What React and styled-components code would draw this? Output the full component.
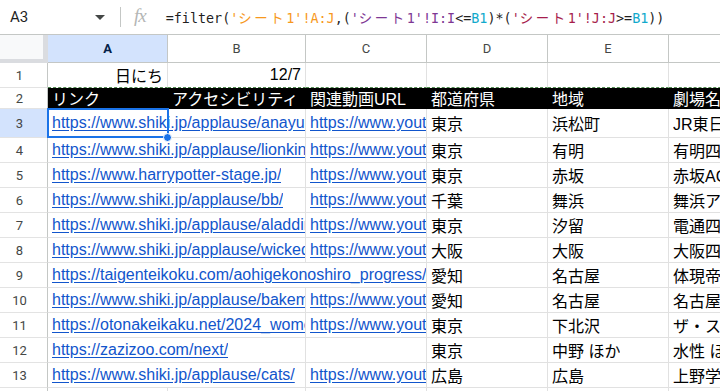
import React from "react";
import styled, { createGlobalStyle, css } from "styled-components";

const GlobalStyle = createGlobalStyle`
    html, body {
        margin: 0;
        padding: 0;
        background: #ffffff;
        overflow: hidden;
    }
    body {
        font-family: "Liberation Sans", Arial, "Noto Sans CJK JP", sans-serif;
    }
`;

const gridLine = "#e1e1e1";
const headLine = "#c4c7c5";
const selectBlue = "#1a73e8";

const formula = [
    { t: "=filter(" },
    { t: "'", c: "#f7981d" },
    { t: "シート", c: "#f7981d", cjk: true },
    { t: "1'!A:J", c: "#f7981d" },
    { t: ",(" },
    { t: "'", c: "#7e3794" },
    { t: "シート", c: "#7e3794", cjk: true },
    { t: "1'!I:I", c: "#7e3794" },
    { t: "<=" },
    { t: "B1", c: "#11a9cc" },
    { t: ")*(" },
    { t: "'", c: "#a61d4c" },
    { t: "シート", c: "#a61d4c", cjk: true },
    { t: "1'!J:J", c: "#a61d4c" },
    { t: ">=" },
    { t: "B1", c: "#11a9cc" },
    { t: "))" },
];

const columns = ["A", "B", "C", "D", "E", "F"];

const yt = "https://www.youtube.com/watch?v=";

// each row: height, cells. a cell may span into empty neighbours
const rows = [
    {
        n: 1,
        h: 25,
        dashed: true,
        cells: [
            { t: "日にち", right: true },
            { t: "12/7", right: true },
            {},
            {},
            {},
            {},
        ],
    },
    {
        n: 2,
        h: 21,
        head: true,
        cells: [
            { t: "リンク" },
            { t: "アクセシビリティ" },
            { t: "関連動画URL" },
            { t: "都道府県" },
            { t: "地域" },
            { t: "劇場名" },
        ],
    },
    {
        n: 3,
        h: 29,
        selected: true,
        cells: [
            { t: "https://www.shiki.jp/applause/anayuki/", link: true, span: 2, sel: true },
            { t: yt, link: true },
            { t: "東京" },
            { t: "浜松町" },
            { t: "JR東日本四季劇場［春］" },
        ],
    },
    {
        n: 4,
        cells: [
            { t: "https://www.shiki.jp/applause/lionking/", link: true, span: 2 },
            { t: yt, link: true },
            { t: "東京" },
            { t: "有明" },
            { t: "有明四季劇場" },
        ],
    },
    {
        n: 5,
        cells: [
            { t: "https://www.harrypotter-stage.jp/", link: true, span: 2 },
            { t: yt, link: true },
            { t: "東京" },
            { t: "赤坂" },
            { t: "赤坂ACTシアター" },
        ],
    },
    {
        n: 6,
        cells: [
            { t: "https://www.shiki.jp/applause/bb/", link: true, span: 2 },
            { t: yt, link: true },
            { t: "千葉" },
            { t: "舞浜" },
            { t: "舞浜アンフィシアター" },
        ],
    },
    {
        n: 7,
        cells: [
            { t: "https://www.shiki.jp/applause/aladdin/", link: true, span: 2 },
            { t: yt, link: true },
            { t: "東京" },
            { t: "汐留" },
            { t: "電通四季劇場［海］" },
        ],
    },
    {
        n: 8,
        cells: [
            { t: "https://www.shiki.jp/applause/wicked/", link: true, span: 2 },
            { t: yt, link: true },
            { t: "大阪" },
            { t: "大阪" },
            { t: "大阪四季劇場" },
        ],
    },
    {
        n: 9,
        cells: [
            { t: "https://taigenteikoku.com/aohigekonoshiro_progress/", link: true, span: 3 },
            { t: "愛知" },
            { t: "名古屋" },
            { t: "体現帝国" },
        ],
    },
    {
        n: 10,
        cells: [
            { t: "https://www.shiki.jp/applause/bakemono/", link: true, span: 2 },
            { t: yt, link: true },
            { t: "愛知" },
            { t: "名古屋" },
            { t: "名古屋四季劇場" },
        ],
    },
    {
        n: 11,
        cells: [
            { t: "https://otonakeikaku.net/2024_women/", link: true, span: 2 },
            { t: yt, link: true },
            { t: "東京" },
            { t: "下北沢" },
            { t: "ザ・スズナリ" },
        ],
    },
    {
        n: 12,
        cells: [
            { t: "https://zazizoo.com/next/", link: true, span: 2 },
            {},
            { t: "東京" },
            { t: "中野 ほか" },
            { t: "水性 ほか" },
        ],
    },
    {
        n: 13,
        cells: [
            { t: "https://www.shiki.jp/applause/cats/", link: true, span: 2 },
            { t: yt, link: true },
            { t: "広島" },
            { t: "広島" },
            { t: "上野学園ホール" },
        ],
    },
    { n: 14, cells: [{}, {}, {}, {}, {}, {}] },
];

function App() {
    return (
        <Page>
            <GlobalStyle />
            <FormulaBar>
                <NameBox>
                    <span>A3</span>
                    <DropArrow />
                </NameBox>
                <Divider />
                <FxIcon>fx</FxIcon>
                <Formula>
                    {formula.map((part, i) => (
                        <Token key={i} $color={part.c} $cjk={part.cjk}>
                            {part.t}
                        </Token>
                    ))}
                </Formula>
            </FormulaBar>
            <Sheet $rows={rows.map((r) => r.h || 25)}>
                <Corner />
                {columns.map((col) => (
                    <ColHeader key={col} $active={col === "A"}>
                        {col}
                    </ColHeader>
                ))}
                {rows.map((row) => (
                    <React.Fragment key={row.n}>
                        <RowHeader $active={row.selected}>{row.n}</RowHeader>
                        {row.cells.map((cell, i) => (
                            <Cell
                                key={i}
                                $span={cell.span || 1}
                                $right={cell.right}
                                $head={row.head}
                                $dashed={row.dashed}
                            >
                                <CellText $link={cell.link}>{cell.t}</CellText>
                                {cell.sel && (
                                    <>
                                        <SelectBox />
                                        <FillHandle />
                                    </>
                                )}
                            </Cell>
                        ))}
                    </React.Fragment>
                ))}
            </Sheet>
        </Page>
    );
}

export default App;

const Page = styled.div`
    width: 720px;
    height: 391px;
    overflow: hidden;
    display: flex;
    flex-direction: column;
    background: #ffffff;
`;

const FormulaBar = styled.div`
    flex-shrink: 0;
    height: 34px;
    border-bottom: 1px solid ${headLine};
    display: flex;
    align-items: center;
`;

const NameBox = styled.div`
    width: 115px;
    box-sizing: border-box;
    padding: 0 10px;
    display: flex;
    align-items: center;
    justify-content: space-between;
    font-family: Roboto, "Liberation Sans", sans-serif;
    font-size: 15px;
    color: #1f1f1f;
`;

const DropArrow = styled.span`
    width: 0;
    height: 0;
    border-left: 5px solid transparent;
    border-right: 5px solid transparent;
    border-top: 5px solid #444746;
`;

const Divider = styled.div`
    width: 1px;
    height: 20px;
    background: ${headLine};
    margin-left: 5px;
`;

const FxIcon = styled.span`
    margin-left: 13px;
    font-family: "Liberation Serif", "DejaVu Serif", serif;
    font-style: italic;
    font-size: 19px;
    letter-spacing: -1px;
    color: #b4b6b5;
    line-height: 1;
    margin-top: -3px;
`;

const Formula = styled.div`
    margin-left: 20px;
    font-family: "DejaVu Sans Mono", "Liberation Mono", "Noto Sans CJK JP", monospace;
    font-size: 13.4px;
    color: #1f1f1f;
    white-space: nowrap;
`;

const Token = styled.span`
    color: ${(p) => p.$color || "#1f1f1f"};
    ${(p) =>
        p.$cjk &&
        css`
            font-family: "Noto Sans CJK JP", sans-serif;
            letter-spacing: 2.6px;
        `}
`;

const Sheet = styled.div`
    display: grid;
    grid-template-columns: 48px 120px 138px 121px 121px 121px 121px;
    grid-template-rows: 28px ${(p) => p.$rows.map((h) => `${h}px`).join(" ")};
    width: 790px;
`;

const Corner = styled.div`
    box-sizing: border-box;
    background: #f8f9fa;
    border-right: 5px solid #dadce0;
    border-bottom: 4px solid #dadce0;
`;

const ColHeader = styled.div`
    box-sizing: border-box;
    display: flex;
    align-items: center;
    justify-content: center;
    font-family: Roboto, "Liberation Sans", sans-serif;
    font-size: 13px;
    color: #444746;
    border-right: 1px solid ${headLine};
    border-bottom: 1px solid ${headLine};
    background: #ffffff;
    ${(p) =>
        p.$active &&
        css`
            background: #d3e3fd;
            color: #041e49;
            font-weight: 700;
        `}
`;

const RowHeader = styled.div`
    box-sizing: border-box;
    display: flex;
    align-items: center;
    justify-content: center;
    padding-right: 8px;
    font-family: Roboto, "Liberation Sans", sans-serif;
    font-size: 13px;
    color: #444746;
    border-right: 1px solid ${headLine};
    border-bottom: 1px solid #e3e3e3;
    background: ${(p) => (p.$active ? "#d3e3fd" : "#ffffff")};
`;

const Cell = styled.div`
    position: relative;
    box-sizing: border-box;
    grid-column: span ${(p) => p.$span};
    display: flex;
    align-items: center;
    justify-content: ${(p) => (p.$right ? "flex-end" : "flex-start")};
    padding: ${(p) => (p.$right ? "0 4px 0 0" : "0 0 0 4px")};
    min-width: 0;
    font-size: 16px;
    color: #000000;
    border-right: 1px solid ${gridLine};
    border-bottom: 1px solid ${gridLine};
    ${(p) =>
        p.$head &&
        css`
            background: #000000;
            color: #ffffff;
            border-right-color: #000000;
            border-bottom-color: #000000;
        `}
    ${(p) =>
        p.$dashed &&
        css`
            border-bottom: 1px dashed #4f8a4f;
        `}
`;

const CellText = styled.span`
    display: block;
    flex: 0 1 auto;
    min-width: 0;
    white-space: nowrap;
    overflow: hidden;
    ${(p) =>
        p.$link &&
        css`
            color: #1155cc;
            text-decoration: underline;
            text-underline-offset: 2px;
        `}
`;

const SelectBox = styled.div`
    position: absolute;
    left: -1px;
    top: -1px;
    width: 122px;
    height: 30px;
    box-sizing: border-box;
    border: 2px solid ${selectBlue};
    pointer-events: none;
`;

const FillHandle = styled.div`
    position: absolute;
    z-index: 2;
    left: 115px;
    top: 24px;
    width: 9px;
    height: 9px;
    box-sizing: border-box;
    border-radius: 50%;
    background: ${selectBlue};
    border: 1px solid #ffffff;
`;
